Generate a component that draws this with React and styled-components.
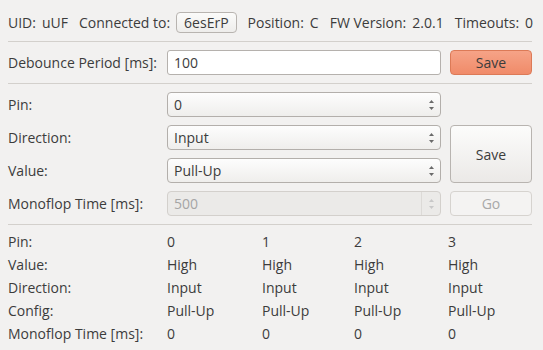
import React from 'react'
import styled, { createGlobalStyle } from 'styled-components'

const GlobalStyle = createGlobalStyle`
  html, body {
    margin: 0;
    padding: 0;
    background: #f2f1f0;
  }
  body {
    font-family: 'Open Sans', 'Noto Sans', sans-serif;
    font-size: 14px;
    color: #3c3c3c;
  }
`

const Page = styled.div`
  width: 543px;
  height: 350px;
  box-sizing: border-box;
  padding: 11px 11px 0 8px;
  overflow: hidden;
`

const TopBar = styled.div`
  display: flex;
  align-items: center;
  gap: 11px;
  height: 22px;
  white-space: nowrap;
`

const Pair = styled.span`
  display: flex;
  align-items: center;
  gap: 6px;
`

const DeviceButton = styled.span`
  display: inline-flex;
  align-items: center;
  justify-content: center;
  height: 19px;
  padding: 0 7px;
  border: 1px solid #b8b4b0;
  border-radius: 4px;
  background: linear-gradient(#fbfbfa, #eeedeb);
`

const Separator = styled.div`
  height: 1px;
  background: #d3d0cc;
  margin: ${props => props.top || 8}px 0 ${props => props.bottom || 8}px;
`

const Row = styled.div`
  display: grid;
  grid-template-columns: 150px 274px 82px;
  column-gap: 9px;
  align-items: center;
  height: 25px;
`

const FormGrid = styled.div`
  display: grid;
  grid-template-columns: 150px 274px 82px;
  grid-template-rows: repeat(4, 25px);
  column-gap: 9px;
  row-gap: 8px;
  align-items: center;
`

const Label = styled.div`
  white-space: nowrap;
`

const TextInput = styled.div`
  height: 25px;
  box-sizing: border-box;
  display: flex;
  align-items: center;
  padding: 0 6px;
  background: #fff;
  border: 1px solid #b5b1ad;
  border-radius: 3px;
`

const Combo = styled.div`
  height: 25px;
  box-sizing: border-box;
  display: flex;
  align-items: center;
  justify-content: space-between;
  padding: 0 5px 0 6px;
  border: 1px solid ${props => props.disabled ? '#d3d0cc' : '#b3afab'};
  border-radius: 4px;
  background: ${props => props.disabled
    ? '#ebeae8'
    : 'linear-gradient(#fdfdfd, #efeeec)'};
  color: ${props => props.disabled ? '#a5a5a5' : '#3c3c3c'};
`

const ArrowBox = styled.span`
  display: flex;
  align-items: center;
  height: 100%;
  padding-left: ${props => props.divided ? 6 : 0}px;
  border-left: ${props => props.divided ? '1px solid #dcdad7' : 'none'};
`

const Button = styled.div`
  box-sizing: border-box;
  height: ${props => props.tall ? '58px' : '25px'};
  grid-row: ${props => props.tall ? 'span 2' : 'auto'};
  display: flex;
  align-items: center;
  justify-content: center;
  border-radius: 4px;
  border: 1px solid ${props =>
    props.accent ? '#dc7a57' : props.disabled ? '#d6d3cf' : '#b8b4b0'};
  background: ${props =>
    props.accent
      ? 'linear-gradient(#f6a387, #f08b69)'
      : props.disabled
        ? '#f4f3f2'
        : 'linear-gradient(#fcfcfb, #ebe9e7)'};
  color: ${props => props.disabled ? '#a8a8a8' : '#3c3c3c'};
`

const Table = styled.div`
  display: grid;
  grid-template-columns: 159px 95px 92px 94px 1fr;
  grid-auto-rows: 23px;
  align-items: center;
  margin-top: 5px;
`

const Arrows = ({ faded }) => (
  <svg width="7" height="12" viewBox="0 0 7 12">
    <path d="M3.5 1 L6 4 L1 4 Z" fill={faded ? '#c8c8c8' : '#6a6a6a'} />
    <path d="M1 8 L6 8 L3.5 11 Z" fill={faded ? '#c8c8c8' : '#6a6a6a'} />
  </svg>
)

const pins = [0, 1, 2, 3]
const tableRows = [
  ['Pin:', p => p],
  ['Value:', () => 'High'],
  ['Direction:', () => 'Input'],
  ['Config:', () => 'Pull-Up'],
  ['Monoflop Time [ms]:', () => 0],
]

const App = () => (
  <>
    <GlobalStyle />
    <Page>
      <TopBar>
        <Pair><span>UID:</span><span>uUF</span></Pair>
        <Pair><span>Connected to:</span><DeviceButton>6esErP</DeviceButton></Pair>
        <Pair><span>Position:</span><span>C</span></Pair>
        <Pair><span>FW Version:</span><span>2.0.1</span></Pair>
        <Pair><span>Timeouts:</span><span>0</span></Pair>
      </TopBar>
      <Separator />
      <Row>
        <Label>Debounce Period [ms]:</Label>
        <TextInput>100</TextInput>
        <Button accent>Save</Button>
      </Row>
      <Separator />
      <FormGrid>
        <Label>Pin:</Label>
        <Combo>0<Arrows /></Combo>
        <div />
        <Label>Direction:</Label>
        <Combo>Input<Arrows /></Combo>
        <Button tall>Save</Button>
        <Label>Value:</Label>
        <Combo>Pull-Up<Arrows /></Combo>
        <Label>Monoflop Time [ms]:</Label>
        <Combo disabled>
          500
          <ArrowBox divided><Arrows faded /></ArrowBox>
        </Combo>
        <Button disabled>Go</Button>
      </FormGrid>
      <Separator bottom={1} />
      <Table>
        {tableRows.map(([label, fn]) => (
          <React.Fragment key={label}>
            <Label>{label}</Label>
            {pins.map(p => <div key={p}>{fn(p)}</div>)}
          </React.Fragment>
        ))}
      </Table>
    </Page>
  </>
)

export default App
